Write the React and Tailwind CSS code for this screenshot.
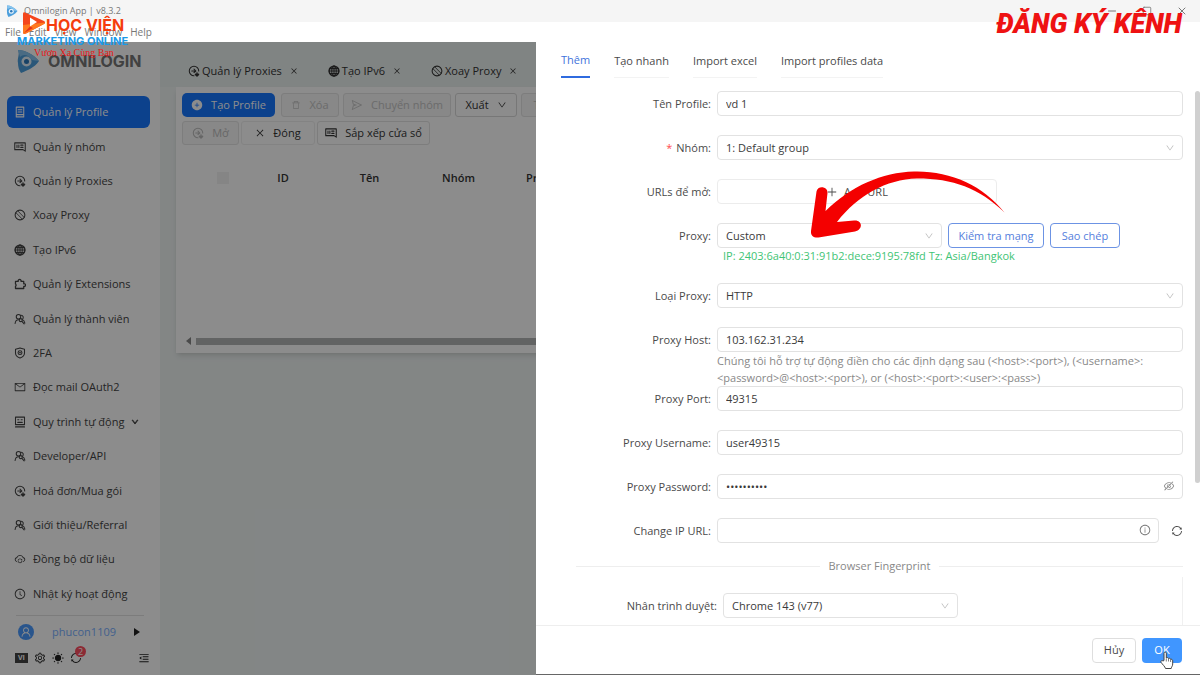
import React from 'react';
import {
    AiFillPlusCircle,
    AiOutlineClockCircle,
    AiOutlineClose,
    AiOutlineCloudSync,
    AiOutlineDelete,
    AiOutlineDown,
    AiOutlineEyeInvisible,
    AiOutlineInfoCircle,
    AiOutlineMail,
    AiOutlineMenuFold,
    AiOutlinePlus,
    AiOutlineSend,
    AiOutlineSetting,
    AiOutlineSync,
    AiOutlineUser,
} from 'react-icons/ai';
import { Minus, Square, X } from 'lucide-react';

const Icon = ({ children, className = 'w-3 h-3' }) => (
    <svg
        viewBox="0 0 16 16"
        fill="none"
        stroke="currentColor"
        strokeWidth="1.4"
        strokeLinecap="round"
        strokeLinejoin="round"
        className={className}
        aria-hidden="true"
    >
        {children}
    </svg>
);

const ProfileIcon = (props) => (
    <Icon {...props}>
        <path d="M3 1.5h10v13H3zM5.5 5h5M5.5 8h5M3 11.5h10" />
    </Icon>
);

const GroupIcon = (props) => (
    <Icon {...props}>
        <path d="M1 2.5h14v11l-3-2H1zM4 5.5v3M6.5 5.5v3M9 5.5h3M9 8.5h3" />
    </Icon>
);

const ProxyIcon = (props) => (
    <Icon {...props}>
        <path d="M14.3 8A6.3 6.3 0 1 0 8 14.3M5 8h5.5M8 5.5 10.5 8 8 10" />
        <path d="M12 10.5v4M10 12.5l2 2.2 2-2.2" strokeWidth="2" />
    </Icon>
);

const RotateIcon = (props) => (
    <Icon {...props}>
        <circle cx="8" cy="8" r="6.5" />
        <path d="M2.5 4.8 11 13.500M5 2.500 13.500 11.200" strokeWidth="1.1" />
    </Icon>
);

const GlobeIcon = (props) => (
    <Icon {...props}>
        <circle cx="8" cy="8" r="6.5" strokeWidth="2" />
        <ellipse cx="8" cy="8" rx="3" ry="6.5" />
        <path d="M1.5 8h13M2.5 4.8h11M2.5 11.2h11M8 1.5v13" />
    </Icon>
);

const ExtensionIcon = (props) => (
    <Icon {...props}>
        <path d="M2 4.5h3.6a2 2 0 1 1 3.8 0H13v3.2a1.8 1.8 0 1 1 0 3.4V14H2v-3a1.8 1.8 0 0 0 0-3z" strokeWidth="1.7" />
    </Icon>
);

const MembersIcon = (props) => (
    <Icon {...props}>
        <circle cx="6" cy="5" r="3" />
        <path d="M1.5 14c.3-3 2-5 4.5-5M9 3a3 3 0 0 1 2 5.5c2 .8 3 2.5 3.5 5" />
        <circle cx="9" cy="9.5" r="2" />
        <path d="M10.5 11.2 13.5 14.5" />
    </Icon>
);

const ShieldIcon = (props) => (
    <Icon {...props}>
        <path d="M8 1.2 14 3v5c0 3.5-2.6 5.6-6 6.8C4.6 13.6 2 11.5 2 8V3z" />
        <circle cx="8" cy="7.5" r="2.6" />
        <path d="M7.5 7.5h1" />
    </Icon>
);

const FlowIcon = (props) => (
    <Icon {...props}>
        <path d="M2 1.5h12v10H2zM2 14.5h12M5 5h1.5M9.5 5H11M5 8.5h6" />
    </Icon>
);

const MENU = [
    { label: 'Quản lý Profile', icon: ProfileIcon, active: true },
    { label: 'Quản lý nhóm', icon: GroupIcon },
    { label: 'Quản lý Proxies', icon: ProxyIcon },
    { label: 'Xoay Proxy', icon: RotateIcon },
    { label: 'Tạo IPv6', icon: GlobeIcon },
    { label: 'Quản lý Extensions', icon: ExtensionIcon },
    { label: 'Quản lý thành viên', icon: MembersIcon },
    { label: '2FA', icon: ShieldIcon },
    { label: 'Đọc mail OAuth2', icon: AiOutlineMail },
    { label: 'Quy trình tự động', icon: FlowIcon, expandable: true },
    { label: 'Developer/API', icon: MembersIcon },
    { label: 'Hoá đơn/Mua gói', icon: ProxyIcon },
    { label: 'Giới thiệu/Referral', icon: MembersIcon },
    { label: 'Đồng bộ dữ liệu', icon: AiOutlineCloudSync },
    { label: 'Nhật ký hoạt động', icon: AiOutlineClockCircle },
];

const PAGE_TABS = [
    { label: 'Quản lý Proxies', icon: ProxyIcon },
    { label: 'Tạo IPv6', icon: GlobeIcon },
    { label: 'Xoay Proxy', icon: RotateIcon },
];

const DRAWER_TABS = ['Thêm', 'Tạo nhanh', 'Import excel', 'Import profiles data'];

const OmniMark = ({ className }) => (
    <svg viewBox="0 0 24 24" className={className} aria-hidden="true">
        <path d="M2 1c7 0 15 4 21 11-5 7-11 9-18 12-2-3-3-6-3-10C1 9 4 6 2 1z" fill="#4d9fdc" />
        <path d="M2 1c7 0 15 4 21 11l-7-1C12 5 7 5 4 8z" fill="#87c4ee" />
        <circle cx="10.5" cy="12.5" r="5" fill="#e6f2fb" />
        <circle cx="10.5" cy="12.5" r="2.5" fill="#2b78bb" />
    </svg>
);

function WindowChrome() {
    return (
        <header className="shrink-0 bg-white text-[#777] text-[10px]">
            <div className="h-[22px] flex items-center justify-between bg-[#f5f5f5] pl-[6px] pr-3">
                <div className="flex items-center gap-[6px]">
                    <OmniMark className="w-3 h-3" />
                    <span className="text-[9px]">Omnilogin App | v8.3.2</span>
                </div>
                <div className="flex items-center gap-6">
                    <button aria-label="Minimize"><Minus className="w-3 h-3" strokeWidth={2} /></button>
                    <button aria-label="Maximize"><Square className="w-[10px] h-[10px]" strokeWidth={2} /></button>
                    <button aria-label="Close"><X className="w-3 h-3" strokeWidth={2} /></button>
                </div>
            </div>
            <nav className="h-5 flex items-center gap-2 pl-[5px]">
                {['File', 'Edit', 'View', 'Window', 'Help'].map((name) => (
                    <button key={name}>{name}</button>
                ))}
            </nav>
        </header>
    );
}

function Sidebar() {
    return (
        <aside className="w-40 shrink-0 bg-white flex flex-col text-[#444]">
            <div className="flex items-center gap-2 pl-4 pt-[7px] pb-[22px]">
                <OmniMark className="w-6 h-6" />
                <span className="font-['Inter'] text-base leading-6 font-bold text-[#777]">OMNILOGIN</span>
            </div>
            <ul className="flex-1 flex flex-col px-[7px] pb-1">
                {MENU.map(({ label, icon: ItemIcon, active, expandable }) => (
                    <li key={label} className="flex-1 flex items-center">
                        <a
                            href="#"
                            className={
                                active
                                    ? 'h-8 w-[143px] rounded-md bg-[#1677ff] text-white flex items-center gap-[7px] pl-[7px]'
                                    : 'h-8 w-[143px] flex items-center gap-[7px] pl-[7px]'
                            }
                        >
                            <ItemIcon className="w-3 h-3 shrink-0" />
                            <span className="whitespace-nowrap">{label}</span>
                            {expandable && <AiOutlineDown className="w-2 h-2 shrink-0" stroke="currentColor" strokeWidth="100" />}
                        </a>
                    </li>
                ))}
            </ul>
            <div className="mx-4 border-t border-[#e2e2e2] pt-2">
                <div className="flex items-center gap-[18px] pl-[2px]">
                    <span className="w-4 h-4 rounded-full bg-[#4b9bff] text-white flex items-center justify-center">
                        <AiOutlineUser className="w-3 h-3" />
                    </span>
                    <a href="#" className="text-[#7ab0ff]">phucon1109</a>
                    <svg viewBox="0 0 6 8" className="w-[6px] h-2" aria-hidden="true">
                        <path d="M0 0 6 4 0 8z" fill="#222" />
                    </svg>
                </div>
            </div>
            <div className="flex items-center gap-[6px] pl-[15px] pr-[10px] pt-3 pb-[11px] text-[#222]">
                <button className="w-[13px] h-[10px] bg-[#444] text-white text-[7px] leading-[10px] font-bold">VI</button>
                <button aria-label="Settings"><AiOutlineSetting className="w-3 h-3" /></button>
                <button aria-label="Theme">
                    <Icon>
                        <circle cx="8" cy="8" r="3.5" fill="currentColor" />
                        <path d="M8 1v1M8 14v1M1 8h1M14 8h1M3 3l.6.6M12.4 12.4l.6.6M13 3l-.6.6M3.6 12.4 3 13" />
                    </Icon>
                </button>
                <button aria-label="Updates" className="relative">
                    <AiOutlineSync className="w-3 h-3" />
                    <span className="absolute -top-[6px] left-[5px] w-[11px] h-[11px] rounded-full bg-[#ff4d5f] text-white text-[9px] leading-[11px] text-center">2</span>
                </button>
                <button aria-label="Collapse menu" className="ml-auto"><AiOutlineMenuFold className="w-3 h-3" /></button>
            </div>
        </aside>
    );
}

const ToolButton = ({ children, className }) => (
    <button className={`h-6 shrink-0 rounded-[3px] flex items-center justify-center gap-2 whitespace-nowrap ${className}`}>
        {children}
    </button>
);

function ProfilePage() {
    return (
        <main className="flex-1 min-w-0 bg-[#eff4f3] text-[#333] overflow-hidden">
            <div className="h-[45px] flex items-center gap-[30px] pl-7 pt-3 bg-[#eaf0ee]">
                {PAGE_TABS.map(({ label, icon: TabIcon }) => (
                    <div key={label} className="flex items-center gap-2">
                        <a href="#" className="flex items-center gap-[2px] whitespace-nowrap">
                            <TabIcon className="w-3 h-3" />
                            {label}
                        </a>
                        <button aria-label={`Close ${label}`}><AiOutlineClose className="w-2 h-2" /></button>
                    </div>
                ))}
            </div>
            <section className="ml-4 h-[266px] flex flex-col bg-white pl-[6px] pt-[6px] shadow-md">
                <div className="flex gap-1">
                    <ToolButton className="w-[93px] bg-[#1677ff] text-white rounded-[5px] mr-[2px]">
                        <AiFillPlusCircle className="w-3 h-3" />Tạo Profile
                    </ToolButton>
                    <ToolButton className="w-[58px] border border-[#e4e4e4] bg-[#f7f7f7] text-[#c4c4c4]">
                        <AiOutlineDelete className="w-[10px] h-[10px]" />Xóa
                    </ToolButton>
                    <ToolButton className="w-[108px] border border-[#e4e4e4] bg-[#f7f7f7] text-[#c4c4c4]">
                        <AiOutlineSend className="w-3 h-3" />Chuyển nhóm
                    </ToolButton>
                    <ToolButton className="w-[62px] border border-[#d9d9d9]">
                        Xuất<AiOutlineDown className="w-[10px] h-[10px]" />
                    </ToolButton>
                    <ToolButton className="w-[54px] border border-[#e4e4e4] bg-[#f7f7f7] text-[#c4c4c4]">
                        Thêm
                    </ToolButton>
                </div>
                <div className="flex gap-[2px] pt-1">
                    <ToolButton className="w-[57px] border border-[#e4e4e4] bg-[#f7f7f7] text-[#bbb]">
                        <ProxyIcon />Mở
                    </ToolButton>
                    <ToolButton className="w-[74px] border border-[#efefef]">
                        <AiOutlineClose className="w-[10px] h-[10px]" />Đóng
                    </ToolButton>
                    <ToolButton className="w-[113px] border border-[#e4e4e4]">
                        <GroupIcon />Sắp xếp cửa sổ
                    </ToolButton>
                </div>
                <table className="table-fixed w-[640px] mt-[21px]">
                    <thead>
                        <tr className="h-6">
                            <th className="w-[58px] pl-6">
                                <span className="block mx-auto w-3 h-3 bg-[#f3f3f3]" />
                            </th>
                            <th className="w-[86px] font-semibold">ID</th>
                            <th className="w-[87px] font-semibold">Tên</th>
                            <th className="w-[91px] font-semibold">Nhóm</th>
                            <th className="w-[74px] font-semibold">Proxy</th>
                            <th />
                        </tr>
                    </thead>
                </table>
                <div className="mt-auto mb-2 flex items-center gap-[5px] pl-1">
                    <svg viewBox="0 0 5 8" className="w-[5px] h-2" aria-hidden="true">
                        <path d="M5 0 0 4 5 8z" fill="#888" />
                    </svg>
                    <div className="flex-1 h-[7px] bg-[#b2b4b4]" />
                </div>
            </section>
        </main>
    );
}

const box = 'w-full h-[25px] rounded-[4px] border border-[#e2e2e2] bg-white pl-2 text-[#3a3a3a] outline-none';

function Field({ id, label, required, wide, children }) {
    return (
        <div className={wide ? 'grid grid-cols-[181px_1fr] gap-[6px]' : 'grid grid-cols-[175px_1fr] gap-[6px]'}>
            <label htmlFor={id} className="h-[25px] flex items-center justify-end gap-1 text-[#4a4a4a]">
                {required && <span className="text-[#ff4d4f]">*</span>}
                {label}:
            </label>
            <div className="min-w-0">{children}</div>
        </div>
    );
}

function SelectBox({ id, value, className = 'w-full' }) {
    return (
        <div className={`relative ${className}`}>
            <select id={id} defaultValue={value} className={`${box} appearance-none`}>
                <option>{value}</option>
            </select>
            <AiOutlineDown className="absolute right-2 top-2 w-[10px] h-[10px] text-[#bbb] pointer-events-none" />
        </div>
    );
}

// Hand-drawn pointer over the proxy row
const RedArrow = () => (
    <svg viewBox="0 0 200 72" className="absolute left-[274px] top-[127px] w-[200px] h-[72px] pointer-events-none" aria-hidden="true">
        <path
            d="M194.5 43.5C173 16 139 1.5 104 2.5C72 3.5 41 17 15.5 42L17.5 24C18 17 7.5 16 6.5 22.5L1 62C.5 67 4 69 8.5 68.5L45 62.5C54 60 52 50.5 44 51.5L27 53C48 26 76 10.5 107 9.5C143 9.5 169 19 194.5 43.5z"
            fill="#f40000"
        />
    </svg>
);

function ProfileDrawer() {
    return (
        <section className="absolute inset-y-0 right-0 w-[664px] bg-white flex flex-col text-[#4a4a4a]">
            <div className="h-[49px] shrink-0 flex items-start gap-6 pl-[25px] pt-[10px]">
                {DRAWER_TABS.map((name, i) => (
                    <button
                        key={name}
                        className={
                            i === 0
                                ? 'h-[26px] pb-2 border-b-2 border-[#2f6bdf] text-[#3f73dc]'
                                : 'h-[26px] pb-2 border-b border-[#f3f3f3]'
                        }
                    >
                        {name}
                    </button>
                ))}
            </div>
            <div className="flex-1 min-h-0 flex overflow-hidden">
                <form className="flex-1 min-w-0 flex flex-col gap-[19px] mr-3">
                    <Field id="name" label="Tên Profile">
                        <input id="name" defaultValue="vd 1" className={box} />
                    </Field>
                    <Field id="group" label="Nhóm" required>
                        <SelectBox id="group" value="1: Default group" />
                    </Field>
                    <Field id="urls" label="URLs để mở">
                        <button id="urls" type="button" className="w-[280px] h-[25px] rounded-[4px] border border-[#ececec] flex items-center justify-center gap-[6px]">
                            <AiOutlinePlus className="w-3 h-3" />Add URL
                        </button>
                    </Field>
                    <Field id="proxy" label="Proxy">
                        <div className="flex items-center gap-[6px]">
                            <SelectBox id="proxy" value="Custom" className="w-[225px]" />
                            <button type="button" className="h-[25px] w-24 rounded-[4px] border border-[#6c93e4] text-[#5580dd]">Kiểm tra mạng</button>
                            <button type="button" className="h-[25px] w-[70px] rounded-[4px] border border-[#6c93e4] text-[#5580dd]">Sao chép</button>
                        </div>
                        <p className="h-4 pl-[6px] text-[#3fc475]">IP: 2403:6a40:0:31:91b2:dece:9195:78fd Tz: Asia/Bangkok</p>
                    </Field>
                    <Field id="kind" label="Loại Proxy">
                        <SelectBox id="kind" value="HTTP" />
                    </Field>
                    <div>
                        <Field id="host" label="Proxy Host">
                            <input id="host" defaultValue="103.162.31.234" className={box} />
                            <p className="h-[34px] leading-[17px] text-[#888]">
                                Chúng tôi hỗ trợ tự động điền cho các định dạng sau (&lt;host&gt;:&lt;port&gt;), (&lt;username&gt;:
                                <br />
                                &lt;password&gt;@&lt;host&gt;:&lt;port&gt;), or (&lt;host&gt;:&lt;port&gt;:&lt;user&gt;:&lt;pass&gt;)
                            </p>
                        </Field>
                        <Field id="port" label="Proxy Port">
                            <input id="port" defaultValue="49315" className={box} />
                        </Field>
                    </div>
                    <Field id="user" label="Proxy Username">
                        <input id="user" defaultValue="user49315" className={box} />
                    </Field>
                    <Field id="pass" label="Proxy Password">
                        <div className="relative">
                            <input id="pass" type="password" defaultValue="abcdefghij" className={box} />
                            <button type="button" aria-label="Show password" className="absolute right-2 top-[6px] text-[#888]">
                                <AiOutlineEyeInvisible className="w-3 h-3" />
                            </button>
                        </div>
                    </Field>
                    <Field id="change" label="Change IP URL">
                        <div className="flex items-center gap-3">
                            <div className="relative flex-1">
                                <input id="change" className={box} />
                                <AiOutlineInfoCircle className="absolute right-2 top-[6px] w-3 h-3 text-[#777]" />
                            </div>
                            <button type="button" aria-label="Refresh"><AiOutlineSync className="w-3 h-3" /></button>
                        </div>
                    </Field>
                    <div className="-mt-1 ml-10 flex items-center gap-2 text-[#888]">
                        <span className="flex-1 border-t border-[#eee]" />
                        Browser Fingerprint
                        <span className="flex-1 border-t border-[#eee]" />
                    </div>
                    <div className="-mt-4 pt-4 pb-2 border-r border-[#f0f0f0]">
                        <Field id="browser" label="Nhân trình duyệt" wide>
                            <SelectBox id="browser" value="Chrome 143 (v77)" className="w-[235px]" />
                        </Field>
                    </div>
                </form>
                <div className="w-[5px]">
                    <div className="h-[392px] rounded-sm bg-[#d0d0d0]" />
                </div>
            </div>
            <footer className="h-[50px] shrink-0 flex items-center justify-end gap-[6px] pr-[18px] border-t border-[#eee] border-b border-b-[#666]">
                <button className="h-[25px] w-11 rounded-[4px] border border-[#dedede]">Hủy</button>
                <button className="relative h-[25px] w-10 rounded-[4px] bg-[#4096ff] text-white">
                    OK
                    <svg viewBox="0 0 14 18" className="absolute left-[18px] top-[13px] w-[14px] h-[18px]" aria-hidden="true">
                        <path
                            d="M4 9.5V2.2C4 .6 6.3.6 6.3 2.2V7C7 6.3 8.3 6.5 8.5 7.5 9.3 7 10.5 7.3 10.6 8.3 11.5 8 12.7 8.5 12.7 9.8V13c0 2-1.2 2.5-1.5 4.5H5.5C5 15.5 2.5 13.5 1 11.3.4 10 2 9 3 10z"
                            fill="#fff"
                            stroke="#444"
                            strokeWidth="1"
                        />
                        <path d="M6.3 7.5v3M8.5 8v2.5M10.6 8.5V11" stroke="#444" strokeWidth=".7" />
                    </svg>
                </button>
            </footer>
            <RedArrow />
        </section>
    );
}

// Channel branding laid over the window
function Watermarks() {
    return (
        <>
            <div className="absolute left-[17px] top-[11px] pointer-events-none">
                <div className="flex items-center h-6 pl-[5px]">
                    <svg viewBox="0 0 24 24" className="w-6 h-6" aria-hidden="true">
                        <path d="M3 1.5C2 1 1 1.5 1 3v18c0 2 1 2.5 3 1.5L22 13c1.5-1 1.5-2 0-3z" fill="#f4461b" />
                        <path d="M1 14v7c0 2 1 2.5 3 1.5L22 13c.8-.5 1-1 1-1.500z" fill="#ff7a1e" />
                        <path d="M8 6.5v9l7-4.5z" fill="#fff" />
                        <path d="M8 15.500 2 22l9-5z" fill="#e6321a" />
                    </svg>
                    <span className="font-['Inter'] font-bold text-base leading-6 pt-1 text-[#f53d0c] whitespace-nowrap">HỌC VIỆN</span>
                </div>
                <p className="font-['Inter'] font-bold text-[11px] leading-3 text-[#1b9ae8] whitespace-nowrap">MARKETING ONLINE</p>
                <p className="font-['Liberation_Serif'] text-[10px] leading-3 pl-[17px] text-[#e81818] whitespace-nowrap">Vươn Xa Cùng Bạn</p>
            </div>
            <p className="absolute right-[18px] top-[10px] font-['Roboto'] font-black italic text-[27px] leading-7 text-[#ee1212] whitespace-nowrap pointer-events-none">
                ĐĂNG KÝ KÊNH
            </p>
        </>
    );
}

export default function App() {
    return (
        <div className="relative h-screen w-full overflow-hidden flex flex-col bg-white font-['Open_Sans',sans-serif] text-[11px] leading-4">
            <WindowChrome />
            <div className="relative flex-1 min-h-0 flex">
                <Sidebar />
                <ProfilePage />
                <div className="absolute inset-0 bg-black/45" />
                <ProfileDrawer />
            </div>
            <Watermarks />
        </div>
    );
}
